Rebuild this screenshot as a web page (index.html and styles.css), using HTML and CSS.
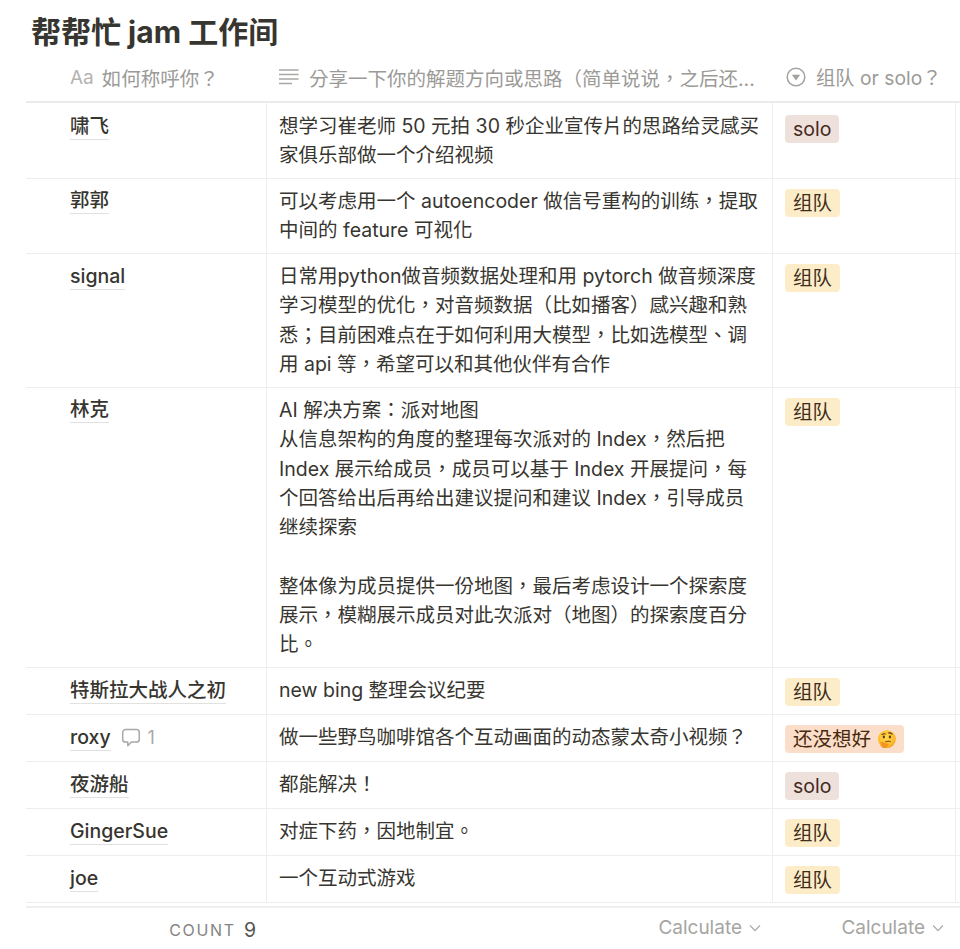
FILE: index.html
```html
<!DOCTYPE html>
<html lang="zh-Hant">
<head>
<meta charset="utf-8">
<title>帮帮忙 jam 工作间</title>
<link rel="stylesheet" href="styles.css">
</head>
<body>
<main class="page">
  <h1 class="title">帮帮忙 jam 工作间</h1>
  <div class="table">
    <div class="head">
      <div class="hcell hname"><span class="aa">Aa</span><span>如何称呼你？</span></div>
      <div class="hcell hdesc">
        <svg class="hicon" viewBox="0 0 20 20" width="20" height="20"><path d="M0 3H19.5M0 7.5H19.5M0 12H19.5M0 16.5H13" fill="none" stroke="#a9a8a5" stroke-width="1.3"/></svg>
        <span class="ellipsis">分享一下你的解题方向或思路（简单说说，之后还...</span>
      </div>
      <div class="hcell htag">
        <svg class="hicon" viewBox="0 0 20 20" width="20" height="20"><circle cx="10" cy="10" r="8.8" fill="none" stroke="#a3a29f" stroke-width="1.5"/><path d="M5.8 7.8H14.2L10 13.6Z" fill="#a3a29f"/></svg>
        <span>组队 or solo？</span>
      </div>
      <div class="hcell hrest"></div>
    </div>

    <div class="row">
      <div class="cell name first"><span class="link">啸飞</span></div>
      <div class="cell desc first">想学习崔老师 50 元拍 30 秒企业宣传片的思路给灵感买<br>家俱乐部做一个介绍视频</div>
      <div class="cell tagcell first"><span class="tag solo">solo</span></div>
      <div class="cell rest"></div>
    </div>
    <div class="row">
      <div class="cell name"><span class="link">郭郭</span></div>
      <div class="cell desc">可以考虑用一个 autoencoder 做信号重构的训练，提取<br>中间的 feature 可视化</div>
      <div class="cell tagcell"><span class="tag team">组队</span></div>
      <div class="cell rest"></div>
    </div>
    <div class="row">
      <div class="cell name"><span class="link">signal</span></div>
      <div class="cell desc">日常用python做音频数据处理和用 pytorch 做音频深度<br>学习模型的优化，对音频数据（比如播客）感兴趣和熟<br>悉；目前困难点在于如何利用大模型，比如选模型、调<br>用 api 等，希望可以和其他伙伴有合作</div>
      <div class="cell tagcell"><span class="tag team">组队</span></div>
      <div class="cell rest"></div>
    </div>
    <div class="row">
      <div class="cell name"><span class="link">林克</span></div>
      <div class="cell desc">AI 解决方案：派对地图<br>从信息架构的角度的整理每次派对的 Index，然后把<br>Index 展示给成员，成员可以基于 Index 开展提问，每<br>个回答给出后再给出建议提问和建议 Index，引导成员<br>继续探索<br><br>整体像为成员提供一份地图，最后考虑设计一个探索度<br>展示，模糊展示成员对此次派对（地图）的探索度百分<br>比。</div>
      <div class="cell tagcell"><span class="tag team">组队</span></div>
      <div class="cell rest"></div>
    </div>
    <div class="row">
      <div class="cell name"><span class="link">特斯拉大战人之初</span></div>
      <div class="cell desc">new bing 整理会议纪要</div>
      <div class="cell tagcell"><span class="tag team">组队</span></div>
      <div class="cell rest"></div>
    </div>
    <div class="row">
      <div class="cell name"><span class="link">roxy</span>
        <span class="comment">
          <svg viewBox="0 0 20 20" width="20" height="20"><path d="M4.6 1.6H15.4A2.9 2.9 0 0 1 18.3 4.5V11.2A2.9 2.9 0 0 1 15.4 14.1H10.4L6.8 17.8V14.1H4.6A2.9 2.9 0 0 1 1.7 11.2V4.5A2.9 2.9 0 0 1 4.6 1.6Z" fill="none" stroke="#a9a8a5" stroke-width="1.5" stroke-linejoin="round"/></svg>
          <span>1</span>
        </span>
      </div>
      <div class="cell desc">做一些野鸟咖啡馆各个互动画面的动态蒙太奇小视频？</div>
      <div class="cell tagcell"><span class="tag unsure">还没想好
        <svg class="emoji" viewBox="0 0 20 20" width="20" height="20"><defs><radialGradient id="face" cx="0.45" cy="0.4" r="0.65"><stop offset="0" stop-color="#ffd84d"/><stop offset="0.7" stop-color="#fdbd2a"/><stop offset="1" stop-color="#f39a1d"/></radialGradient></defs><circle cx="10.4" cy="9.6" r="9.4" fill="url(#face)"/><ellipse cx="7.2" cy="7.4" rx="1.2" ry="1.5" fill="#5b3a1e"/><ellipse cx="13.6" cy="7.4" rx="1.2" ry="1.5" fill="#5b3a1e"/><path d="M5.2 4.8Q6.8 3.4 8.8 4.2M12 3.2Q14.2 2.6 16 4.4" fill="none" stroke="#5b3a1e" stroke-width="1.1" stroke-linecap="round"/><path d="M9 12.4Q11.5 11.4 14 12.2" fill="none" stroke="#7a4a22" stroke-width="1.1" stroke-linecap="round"/><path d="M3.6 12.6Q7 12.4 8.6 14L11.8 14.2Q12.8 15.2 11.4 15.9L10.4 18.4Q6.6 20 4.6 17.4Z" fill="#f4931e"/></svg>
      </span></div>
      <div class="cell rest"></div>
    </div>
    <div class="row">
      <div class="cell name"><span class="link">夜游船</span></div>
      <div class="cell desc">都能解决！</div>
      <div class="cell tagcell"><span class="tag solo">solo</span></div>
      <div class="cell rest"></div>
    </div>
    <div class="row">
      <div class="cell name"><span class="link">GingerSue</span></div>
      <div class="cell desc">对症下药，因地制宜。</div>
      <div class="cell tagcell"><span class="tag team">组队</span></div>
      <div class="cell rest"></div>
    </div>
    <div class="row">
      <div class="cell name"><span class="link">joe</span></div>
      <div class="cell desc">一个互动式游戏</div>
      <div class="cell tagcell"><span class="tag team">组队</span></div>
      <div class="cell rest"></div>
    </div>

    <div class="foot">
      <div class="fcell fname"><span class="count">COUNT</span><span class="num">9</span></div>
      <div class="fcell fcalc">Calculate
        <svg viewBox="0 0 12 12" width="12" height="12"><path d="M1 3.5L6 8.5L11 3.5" fill="none" stroke="#b0afac" stroke-width="1.3"/></svg>
      </div>
      <div class="fcell fcalc">Calculate
        <svg viewBox="0 0 12 12" width="12" height="12"><path d="M1 3.5L6 8.5L11 3.5" fill="none" stroke="#b0afac" stroke-width="1.3"/></svg>
      </div>
    </div>
  </div>
</main>
</body>
</html>
```

FILE: styles.css
```css
* { box-sizing: border-box; }
html, body { margin: 0; padding: 0; background: #fff; }
body {
  width: 960px;
  height: 949px;
  overflow: hidden;
  font-family: Inter, "Noto Sans CJK TC", sans-serif;
  color: #37352f;
}
.page { padding-left: 26px; }
.title {
  margin: 0;
  padding: 10px 0 0 5px;
  height: 56px;
  font-size: 30px;
  line-height: 44px;
  font-weight: 700;
  white-space: nowrap;
  color: #37352f;
}
.table { width: 934px; }
.head, .row, .foot {
  display: grid;
  grid-template-columns: 240px 506px 183px 5px;
}
.head {
  height: 47px;
  padding-bottom: 3px;
  border-bottom: 2px solid #ebebea;
}
.hcell {
  display: flex;
  align-items: center;
  gap: 10px;
  font-size: 19.5px;
  color: #9b9a97;
  white-space: nowrap;
  overflow: hidden;
}
.hname { padding-left: 44px; gap: 8px; }
.hdesc { padding-left: 13px; }
.htag { padding-left: 14px; font-size: 19.3px; }
.aa { font-size: 19px; color: #b4b3b0; }
.hicon { flex: none; }
.row {
  border-bottom: 1px solid #eeeeed;
}
.cell {
  font-size: 19.5px;
  line-height: 29.3px;
  white-space: nowrap;
  color: #37352f;
}
.name {
  padding: 9.5px 0 0 44px;
  font-weight: 500;
  display: flex;
  align-items: flex-start;
  gap: 10px;
}
.link { border-bottom: 1.5px solid #e1e1df; line-height: 25px; }
.desc {
  padding: 8px 0 7.6px 12px;
  border-left: 1px solid #eeeeed;
}
.desc.first { padding-top: 9px; padding-bottom: 7.4px; }
.name.first { padding-top: 10.5px; }
.tagcell {
  display: flex;
  align-items: flex-start;
  padding: 10px 0 8px 12px;
  border-left: 1px solid #eeeeed;
}
.tagcell.first { padding-top: 12px; }
.rest { border-left: 1px solid #eeeeed; }
.tag {
  display: inline-flex;
  align-items: center;
  gap: 6px;
  height: 28px;
  padding: 0 8px;
  border-radius: 4px;
  line-height: 28px;
  font-size: 19.5px;
}
.solo { background: #eee0da; color: #442a1e; }
.team { background: #fdecc8; color: #402c1b; }
.unsure { background: #fadec9; color: #49290e; }
.emoji { width: 19px; height: 19px; }
.comment {
  display: inline-flex;
  align-items: center;
  gap: 7px;
  height: 26px;
  font-size: 18px;
  font-weight: 400;
  color: #a9a8a5;
}
.foot {
  margin-top: 3px;
  border-top: 2px solid #efefee;
  height: 44px;
}
.fcell {
  display: flex;
  align-items: center;
  justify-content: flex-end;
  gap: 7px;
  font-size: 19px;
  color: #a6a5a2;
}
.fname { padding: 2px 10px 0 0; gap: 8px; }
.count { font-size: 16px; letter-spacing: 1.7px; color: #858481; }
.num { font-size: 19.5px; color: #55534e; }
.fcalc { padding: 0 11px 3px 0; }
```
